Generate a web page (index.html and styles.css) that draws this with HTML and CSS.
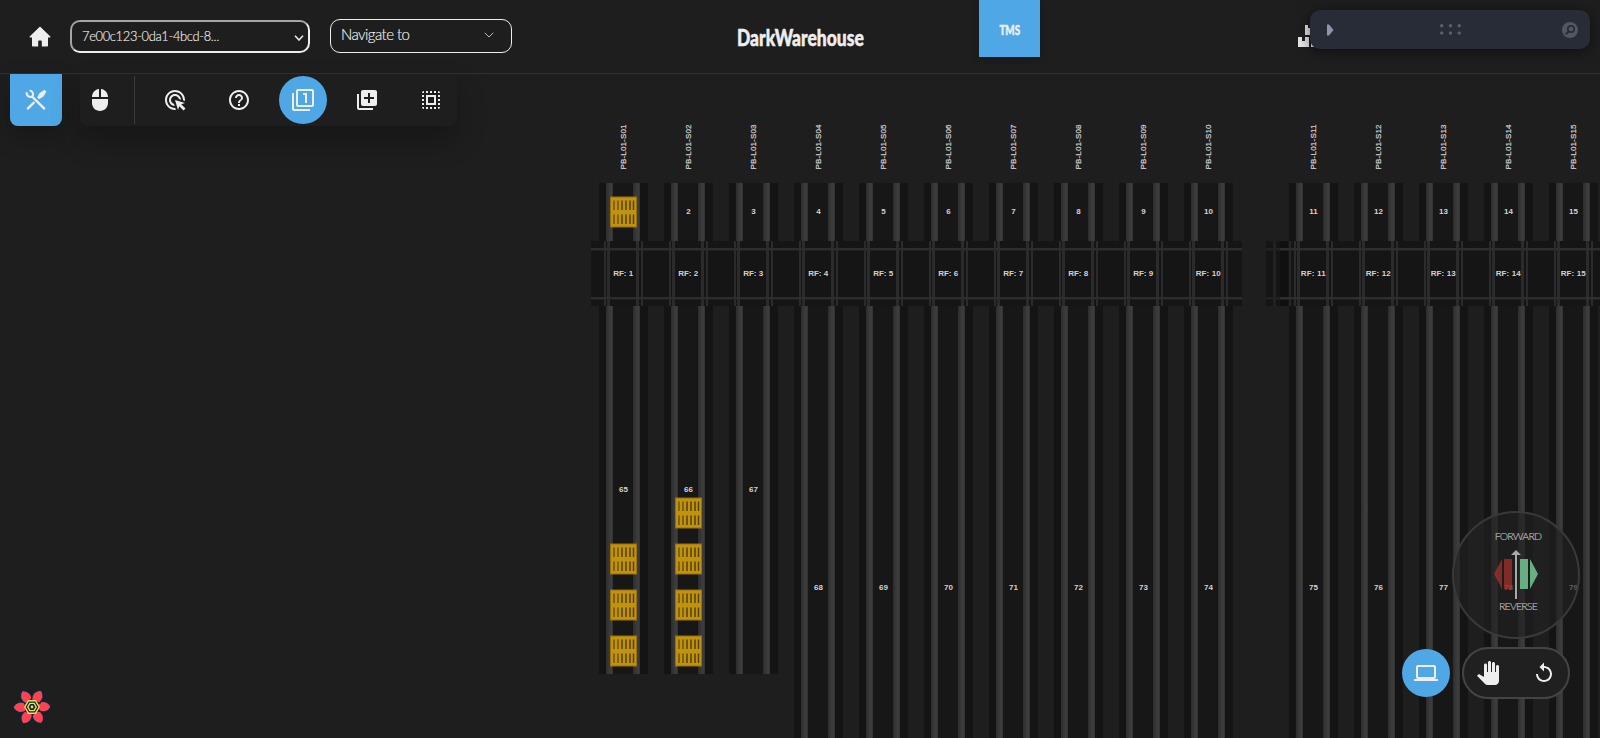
FILE: index.html
```html
<!DOCTYPE html>
<html lang="en">
<head>
<meta charset="utf-8">
<title>DarkWarehouse</title>
<link rel="stylesheet" href="styles.css">
</head>
<body>
<svg class="map" id="map" width="1600" height="738" viewBox="0 0 1600 738">
  <defs>
    <linearGradient id="rail"><stop offset="0" stop-color="#2c2c2c"/><stop offset=".3" stop-color="#353535"/><stop offset=".75" stop-color="#3e3e3e"/><stop offset="1" stop-color="#303030"/></linearGradient>
    <symbol id="pallet" width="27" height="31" viewBox="0 0 27 31">
      <rect width="27" height="31" fill="#c0930f"/>
      <rect x=".5" y=".5" width="26" height="30" fill="none" stroke="#9a6e08"/>
      <path d="M4 4v9.500M4 18v9.500M8 4v9.500M8 18v9.500" stroke="#7a5a08" stroke-width="1.700"/>
      <path d="M12 4v9.500M12 18v9.500M16 4v9.500M16 18v9.500M20 4v9.500M20 18v9.500M23.500 4v9.500M23.500 18v9.500" stroke="#54400c" stroke-width="1.500"/>
    </symbol>
  </defs>
</svg>

<div class="page">
  <header class="header">
    <svg class="home" width="22" height="22" viewBox="0 0 22 22"><path d="M11 .6 21.300 10.400q.6.900-.5 1.100H19v8.300q0 .8-.8.8h-5.400v-5.200q0-.8-.8-.8h-2q-.8 0-.8.800v5.200H3.800q-.8 0-.8-.8v-8.300H1.200Q.1 11.300.7 10.400z"/></svg>
    <div class="select"><span class="select-text">7e00c123-0da1-4bcd-8...</span><svg width="10" height="6" viewBox="0 0 10 6"><path d="M1 .8 5 5l4-4.200"/></svg></div>
    <div class="navigate"><span class="navigate-text">Navigate to</span><svg width="10" height="6" viewBox="0 0 10 6"><path d="M.8.8 5 5l4.200-4.200"/></svg></div>
    <h1 class="title"><span>DarkWarehouse</span></h1>
    <div class="tms"><span>TMS</span></div>
    <svg class="boxes" width="34" height="23" viewBox="0 0 34 23"><path d="M0 12h4v4h3v-4h4v10H0zM7 0h3v3h3V0h5v10H7zM13 12h8v10h-8z"/></svg>
  </header>

  <nav class="tools">
    <div class="tools-toggle"><svg width="24" height="24" viewBox="0 0 24 24"><g fill="none" stroke="#eee"><path d="M7.500 8 20.800 21.200M10.500 14 3.200 21.200" stroke-width="2.400"/><path d="M2.900 4.200A3.600 3.600 0 0 0 8.300 8.300 3.600 3.600 0 0 0 5.600 2.500" stroke-width="2"/></g><path fill="#eee" d="M13.200 9.500 15.600 5l4.900-3.200 1.900 1.900-3 4.900-4.400 2.700z"/></svg></div>
    <div class="toolbar">
      <div class="tool first"><svg viewBox="0 0 24 24"><path d="M13 1.070V9h7c0-4.080-3.050-7.440-7-7.930zM4 15c0 4.420 3.580 8 8 8s8-3.580 8-8v-4H4v4zm7-13.930C7.050 1.560 4 4.920 4 9h7V1.070z"/></svg></div>
      <div class="tool"><svg viewBox="0 0 24 24"><path d="M11.710 17.990C8.530 17.840 6 15.220 6 12c0-3.310 2.690-6 6-6 3.220 0 5.840 2.530 5.990 5.710l-2.100-.63C15.480 9.310 13.890 8 12 8c-2.210 0-4 1.790-4 4 0 1.890 1.310 3.480 3.080 3.890l.63 2.100zM22 12c0 .3-.01.6-.04.9l-1.970-.59C20 12.210 20 12.100 20 12c0-4.420-3.580-8-8-8s-8 3.580-8 8 3.580 8 8 8c.1 0 .21 0 .31-.01l.59 1.970C12.600 21.990 12.300 22 12 22 6.480 22 2 17.520 2 12S6.480 2 12 2s10 4.480 10 10zm-3.770 4.260L22 15l-10-3 3 10 1.260-3.770 4.270 4.270 1.980-1.980-4.280-4.260z"/></svg></div>
      <div class="tool"><svg viewBox="0 0 24 24"><path d="M11 18h2v-2h-2v2zm1-16C6.480 2 2 6.480 2 12s4.480 10 10 10 10-4.480 10-10S17.520 2 12 2zm0 18c-4.410 0-8-3.590-8-8s3.590-8 8-8 8 3.590 8 8-3.590 8-8 8zm0-14c-2.210 0-4 1.790-4 4h2c0-1.100.9-2 2-2s2 .9 2 2c0 2-3 1.750-3 5h2c0-2.250 3-2.500 3-5 0-2.210-1.790-4-4-4z"/></svg></div>
      <div class="tool active"><svg viewBox="0 0 24 24"><path d="M3 5H1v16c0 1.100.9 2 2 2h16v-2H3V5zm11 10h2V5h-4v2h2v8zm7-14H7c-1.100 0-2 .9-2 2v14c0 1.100.9 2 2 2h14c1.100 0 2-.9 2-2V3c0-1.100-.9-2-2-2zm0 16H7V3h14v14z"/></svg></div>
      <div class="tool"><svg viewBox="0 0 24 24"><path d="M4 6H2v14c0 1.100.9 2 2 2h14v-2H4V6zm16-4H8c-1.100 0-2 .9-2 2v12c0 1.100.9 2 2 2h12c1.100 0 2-.9 2-2V4c0-1.100-.9-2-2-2zm-1 9h-4v4h-2v-4H9V9h4V5h2v4h4v2z"/></svg></div>
      <div class="tool"><svg viewBox="0 0 24 24"><path d="M3 5h2V3c-1.100 0-2 .9-2 2zm0 8h2v-2H3v2zm4 8h2v-2H7v2zM3 9h2V7H3v2zm10-6h-2v2h2V3zm6 0v2h2c0-1.100-.9-2-2-2zM5 21v-2H3c0 1.100.9 2 2 2zm-2-4h2v-2H3v2zM9 3H7v2h2V3zm2 18h2v-2h-2v2zm8-8h2v-2h-2v2zm0 8c1.100 0 2-.9 2-2h-2v2zm0-12h2V7h-2v2zm0 8h2v-2h-2v2zm-4 4h2v-2h-2v2zm0-16h2V3h-2v2zM7 17h10V7H7v10zm2-8h6v6H9V9z"/></svg></div>
    </div>
  </nav>
</div>

<div class="leva">
  <svg width="16" height="12" viewBox="0 0 16 12"><path d="M0 .5h2L6.500 6 2 11.500H0z" fill="#9094a8"/></svg>
  <svg width="21" height="11" viewBox="0 0 21 11" fill="#5b5f69"><circle cx="1.700" cy="1.700" r="1.700"/><circle cx="10.500" cy="1.700" r="1.700"/><circle cx="19.200" cy="1.700" r="1.700"/><circle cx="1.700" cy="9" r="1.700"/><circle cx="10.500" cy="9" r="1.700"/><circle cx="19.200" cy="9" r="1.700"/></svg>
  <svg width="16" height="16" viewBox="0 0 16 16"><circle cx="8" cy="8" r="8" fill="#535760"/><circle cx="9" cy="7" r="3.200" fill="none" stroke="#282c37" stroke-width="1.700"/><path d="M7 9.200 3.800 12.300" stroke="#282c37" stroke-width="2"/></svg>
</div>

<div class="compass">
  <span class="forward">FORWARD</span>
  <svg width="44" height="50" viewBox="0 0 44 50"><path d="M8 9v30L0 24zM10 9h8v30h-8z" fill="#c0322a" opacity=".62"/><path d="M26 9h8v30h-8zM36 9v30l8-15z" fill="#68ae83"/><path d="M22 3v46" stroke="#aaa" stroke-width="2"/><path d="M22 0l5 5H17z" fill="#aaa"/></svg>
  <span class="reverse">REVERSE</span>
</div>

<div class="controls">
  <div class="round"><svg width="24" height="24" viewBox="0 0 24 24"><path d="M20 18c1.100 0 1.990-.9 1.990-2L22 6c0-1.100-.9-2-2-2H4c-1.100 0-2 .9-2 2v10c0 1.100.9 2 2 2H0v2h24v-2h-4zM4 6h16v10H4V6z"/></svg></div>
  <div class="pill">
    <svg width="24" height="24" viewBox="0 0 24 24"><path d="M23 5.500V20c0 2.200-1.800 4-4 4h-7.300c-1.080 0-2.100-.43-2.850-1.190L1 14.830s1.260-1.230 1.300-1.250c.22-.19.49-.29.79-.29.22 0 .42.06.6.16.04.01 4.310 2.460 4.310 2.460V4c0-.83.67-1.500 1.500-1.500S11 3.170 11 4v7h1V1.500c0-.83.67-1.500 1.500-1.500S15 .67 15 1.500V11h1V2.500c0-.83.67-1.500 1.500-1.500s1.500.67 1.500 1.500V11h1V5.500c0-.83.67-1.500 1.500-1.500s1.500.67 1.500 1.500z"/></svg>
    <svg width="24" height="24" viewBox="0 0 24 24"><path d="M12 5V1.500L7.500 6l4.500 4.500V7c3.310 0 6 2.690 6 6s-2.690 6-6 6-6-2.690-6-6H4c0 4.420 3.580 8 8 8s8-3.580 8-8-3.580-8-8-8z"/></svg>
  </div>
</div>

<svg class="query-logo" width="40" height="36" viewBox="-20 -18 40 36">
  <g fill="#ff4154" stroke="#002b41" stroke-width="1.400" id="petals"></g>
  <g fill="none" stroke="#ffd94c" stroke-width="1.400"><path d="M-3.600-6.200h7.200L7.200 0 3.600 6.200h-7.200L-7.200 0z" fill="#002b41"/><path d="M-2.100-3.600h4.200L4.200 0 2.100 3.600h-4.200L-4.200 0z"/></g><circle r="1.400" fill="#ffd94c"/>
</svg>
<script src="app.js"></script>
</body>
</html>
```
FILE: styles.css
```css
* { box-sizing: border-box; }
body { margin: 0; width: 1600px; height: 738px; overflow: hidden; position: relative; background: #1e1e1e; color: #eee; font-family: Lato, "Open Sans", sans-serif; }
.map { position: absolute; inset: 0; }
.map text { font: bold 8px "Liberation Sans", Arial, sans-serif; fill: #d2d2d2; text-anchor: middle; }
.map .lane-name { font-size: 8px; font-weight: 400; fill: #d0d0d0; stroke: #d0d0d0; stroke-width: .2px; }
.page { position: relative; }
.header { display: flex; align-items: flex-start; height: 74px; border-bottom: 1px solid #303030; background: #1e1e1e; }
.header > * { flex: none; }
.home { margin: 26px 0 0 29px; fill: #eee; }
.select, .navigate { display: flex; justify-content: space-between; border-radius: 10px; font-weight: 300; line-height: 20px; white-space: nowrap; -webkit-text-stroke: .15px #eee; }
.select { width: 240px; height: 33px; margin: 20px 0 0 19px; border: 2px solid; border-color: #a5a5a5 #eee #eee #a5a5a5; padding: 4px 4px 0 10px; font-size: 14px; }
.select-text { display: block; width: 138px; transform: scaleX(.92); transform-origin: left; letter-spacing: -.350px; }
.select svg { margin-top: 9px; fill: none; stroke: #eee; stroke-width: 1.500; }
.navigate { width: 182px; height: 34px; margin: 19px 0 0 20px; border: 1px solid #eee; padding: 4px 17px 0 10px; font-size: 15px; letter-spacing: -.550px; }
.navigate svg { margin-top: 8px; fill: none; stroke: #bbb; stroke-width: 1; }
.title { width: 127px; margin: 23px 0 0 225px; font-weight: 900; font-size: 22px; line-height: 29px; white-space: nowrap; }
.title span { display: inline-block; transform: scaleX(.795); transform-origin: left; -webkit-text-stroke: .5px #eee; }
.tms { display: flex; align-items: center; justify-content: center; width: 61px; height: 57px; margin-left: 115px; padding-top: 1px; background: #4fa8e5; font-weight: 900; font-size: 14px; box-shadow: 0 2px 8px rgba(0,0,0,.2); }
.tms span { transform: scaleX(.7); -webkit-text-stroke: .5px #eee; }
.boxes { margin: 25px 0 0 258px; fill: #e6e6e6; }
.tools { display: flex; gap: 18px; padding-left: 10px; }
.tools-toggle { display: flex; align-items: center; justify-content: center; width: 52px; height: 52px; background: #4fa8e5; border-radius: 0 0 8px 8px; box-shadow: 0 10px 24px rgba(0,0,0,.25); }
.toolbar { display: flex; align-items: center; gap: 16px; width: 377px; height: 52px; background: #1e1e1e; border-radius: 0 0 8px 8px; box-shadow: 0 14px 28px rgba(0,0,0,.28); }
.tool { flex: none; display: flex; align-items: center; justify-content: center; width: 48px; height: 48px; border-radius: 50%; }
.tool svg { width: 24px; height: 24px; fill: #eee; }
.tool.first { width: 55px; padding-right: 15px; border-right: 1px solid #3b3b3b; border-radius: 0; }
.tool.active { background: #4fa8e5; }
.leva { position: absolute; left: 1310px; top: 10px; width: 280px; height: 39px; padding: 0 12px 0 17px; display: flex; align-items: center; justify-content: space-between; background: #282c37; border-radius: 10px; box-shadow: 0 2px 14px rgba(0,0,0,.55); }
.leva svg:nth-child(2) { margin-right: 5px; }
.compass { position: absolute; left: 1452px; top: 511px; width: 128px; height: 128px; padding-top: 16px; display: flex; flex-direction: column; align-items: center; background: rgba(34,34,34,.66); border: 2px solid #393939; border-radius: 50%; color: #b4b4b4; font-size: 10.500px; font-weight: 300; line-height: 15px; letter-spacing: -.8px; -webkit-text-stroke: .2px #b4b4b4; }
.compass span { position: relative; left: 2px; }
.compass svg { margin: 6px 0 0; }
.compass .reverse { margin-top: -1px; }
.controls { position: absolute; left: 1402px; top: 647px; display: flex; align-items: center; gap: 12px; }
.controls svg { fill: #eee; }
.round { display: flex; align-items: center; justify-content: center; width: 48px; height: 48px; border-radius: 50%; background: #4fa8e5; }
.pill { display: flex; align-items: center; justify-content: space-between; width: 108px; height: 52px; padding: 0 12px; border: 2px solid #444; border-radius: 26px; background: #202020; }
.query-logo { position: absolute; left: 12px; top: 689px; }
```
FILE: app.js
```js
const map = document.getElementById('map');
const parts = [];
const rect = (x, y, w, h, fill) => parts.push(`<rect x="${x}" y="${y}" width="${w}" height="${h}" fill="${fill}"/>`);
const label = (x, y, text) => parts.push(`<text x="${x}" y="${y}">${text}</text>`);

function lane(x, y, h) {
  rect(x, y, 49, h, '#141414');
  rect(x + 14, y, 20, h, '#171717');
  rect(x + 7, y, 7, h, 'url(#rail)');
  rect(x + 34, y, 7, h, 'url(#rail)');
}

// Cross aisles behind the RF positions
rect(591, 241, 651, 65, '#151515');
rect(1266, 241, 334, 65, '#151515');
rect(1280, 241, 8, 65, '#101010');
rect(1273, 241, 3, 65, '#222222');
rect(1289, 241, 2, 65, '#262626');

for (let i = 0; i < 15; i++) {
  const x = 599 + i * 65 + (i > 9 ? 40 : 0);
  lane(x, 183, 58);
  lane(x, 306, i < 3 ? 368 : 432);
  rect(x + 5, 241, 2, 65, '#2b2b2b');
  rect(x + 8, 241, 3, 65, '#2b2b2b');
  rect(x + 37, 241, 3, 65, '#2b2b2b');
  rect(x + 42, 241, 2, 65, '#2b2b2b');
}
for (const y of [248, 297]) {
  rect(591, y, 651, 2.5, '#2d2d2d');
  rect(1266, y, 14, 2.5, '#222222');
  rect(1280, y, 320, 2.5, '#2e2e2e');
}
for (let i = 0; i < 15; i++) {
  const x = 599 + i * 65 + (i > 9 ? 40 : 0);
  const n = i + 1;
  const c = x + 24.5;
  parts.push(`<text class="lane-name" transform="translate(${c + 2} 147) rotate(-90)" textLength="45">PB-L01-S${String(n).padStart(2, '0')}</text>`);
  if (n > 1) label(c, 214.4, n);
  parts.push(`<text x="${c - .3}" y="275.700" textLength="${n < 10 ? 20 : 25}">RF: ${n}</text>`);
  label(c, i < 3 ? 492.4 : 590.4, 65 + i);
}
for (const [x, y] of [[610, 196.5], [610, 543.5], [610, 589.5], [610, 635.5], [675, 497.5], [675, 543.5], [675, 589.5], [675, 635.5]]) {
  parts.push(`<use href="#pallet" x="${x}" y="${y}"/>`);
}
map.insertAdjacentHTML('beforeend', parts.join(''));

document.getElementById('petals').innerHTML = [0, 60, 120, 180, 240, 300]
  .map(a => `<path transform="rotate(${a})" d="M6-4Q9-6 13-5.500 18-4 19 0 17 4 13 5L7 5z"/>`).join('');
```
